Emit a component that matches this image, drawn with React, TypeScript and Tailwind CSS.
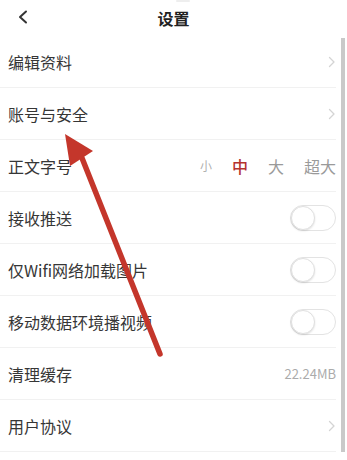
import React from "react";

const FONT = { fontFamily: '"Noto Sans CJK SC", "Noto Sans", sans-serif' };

function Chevron() {
  return (
    <svg width="8" height="12" viewBox="0 0 8 12" fill="none">
      <path d="M1.5 1.5 L6 6 L1.5 10.5" stroke="#d4d4d4" strokeWidth="1.3" strokeLinecap="round" strokeLinejoin="round" />
    </svg>
  );
}

function Toggle() {
  return (
    <div className="relative h-[26px] w-[46px] rounded-full border border-[#e3e3e3] bg-white">
      <div className="absolute left-0 top-0 h-[24px] w-[24px] rounded-full border border-[#e0e0e0] bg-white shadow-[0_1px_2px_rgba(0,0,0,0.12)]" />
    </div>
  );
}

type Row = { label: string; right: React.ReactNode };

const rows: Row[] = [
  { label: "编辑资料", right: <Chevron /> },
  { label: "账号与安全", right: <Chevron /> },
  {
    label: "正文字号",
    right: (
      <div className="flex items-center gap-5 text-[16px] text-[#9a9a9a]">
        <span className="text-[12px] text-[#b0b0b0]">小</span>
        <span className="font-medium text-[#b5332e]">中</span>
        <span>大</span>
        <span>超大</span>
      </div>
    ),
  },
  { label: "接收推送", right: <Toggle /> },
  { label: "仅Wifi网络加载图片", right: <Toggle /> },
  { label: "移动数据环境播视频", right: <Toggle /> },
  { label: "清理缓存", right: <span className="text-[13px] text-[#ababab]">22.24MB</span> },
  { label: "用户协议", right: <Chevron /> },
];

export default function App() {
  return (
    <div className="relative h-[460px] w-[347px] overflow-hidden bg-white" style={FONT}>
      <div className="absolute left-[176px] top-0 h-[2px] w-[14px] rounded-full bg-[#eeeeee]" />
      <header className="relative flex h-[36px] items-center justify-center">
        <svg className="absolute left-[17px] top-[10px]" width="12" height="14" viewBox="0 0 12 14" fill="none">
          <path d="M9 1.5 L3 7 L9 12.5" stroke="#333" strokeWidth="2" strokeLinecap="round" strokeLinejoin="round" />
        </svg>
        <h1 className="text-[16px] font-semibold text-[#222]">设置</h1>
      </header>
      <div className="flex">
        <ul className="flex-1">
          {rows.map((r) => (
            <li
              key={r.label}
              className="flex h-[52px] items-center justify-between border-b border-[#f1f1f1] pl-2"
            >
              <span className="text-[16px] text-[#363636]">{r.label}</span>
              <div className="flex items-center">{r.right}</div>
            </li>
          ))}
        </ul>
        <div className="ml-[5px] mr-[2px] mt-[2px] w-[4px] bg-[#c9c9c9]" />
      </div>
      <svg className="pointer-events-none absolute inset-0" width="347" height="460" viewBox="0 0 347 460">
        <line x1="82" y1="158" x2="160" y2="354" stroke="#c4362b" strokeWidth="5.5" strokeLinecap="round" />
        <polygon points="65,134 70,166 93,151" fill="#c4362b" />
      </svg>
    </div>
  );
}
